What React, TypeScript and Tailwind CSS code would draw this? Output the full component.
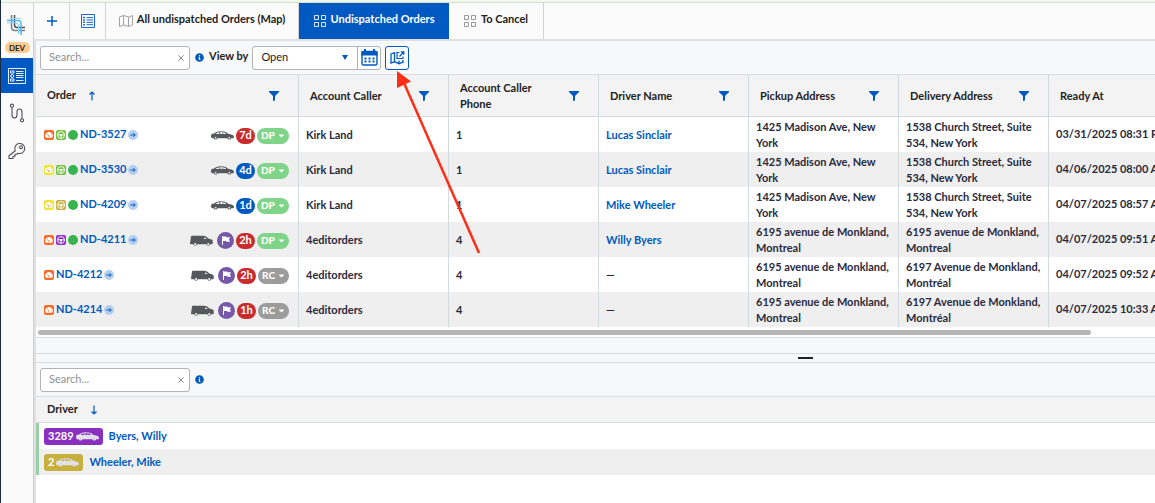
import type { ReactNode } from 'react'
import { FaCaretDown, FaInfoCircle } from 'react-icons/fa'

type Vehicle = 'car' | 'van'

const orders = [
  { id: 'ND-3527', gauge: 'bg-[#f96a26]', wheel: 'bg-[#78c043]', online: true, vehicle: 'car', flag: false, age: '7d', ageColor: 'bg-[#c92c2c]', status: 'DP', caller: 'Kirk Land', phone: '1', driver: 'Lucas Sinclair', pickup: '1425 Madison Ave, New York', delivery: '1538 Church Street, Suite 534, New York', ready: '03/31/2025 08:31 PM' },
  { id: 'ND-3530', gauge: 'bg-[#f0e632]', wheel: 'bg-[#78c043]', online: true, vehicle: 'car', flag: false, age: '4d', ageColor: 'bg-[#0059c1]', status: 'DP', caller: 'Kirk Land', phone: '1', driver: 'Lucas Sinclair', pickup: '1425 Madison Ave, New York', delivery: '1538 Church Street, Suite 534, New York', ready: '04/06/2025 08:00 AM' },
  { id: 'ND-4209', gauge: 'bg-[#f0e632]', wheel: 'bg-[#c8af3e]', online: true, vehicle: 'car', flag: false, age: '1d', ageColor: 'bg-[#0059c1]', status: 'DP', caller: 'Kirk Land', phone: '1', driver: 'Mike Wheeler', pickup: '1425 Madison Ave, New York', delivery: '1538 Church Street, Suite 534, New York', ready: '04/07/2025 08:57 AM' },
  { id: 'ND-4211', gauge: 'bg-[#f96a26]', wheel: 'bg-[#8a30c0]', online: true, vehicle: 'van', flag: true, age: '2h', ageColor: 'bg-[#c92c2c]', status: 'DP', caller: '4editorders', phone: '4', driver: 'Willy Byers', pickup: '6195 avenue de Monkland, Montreal', delivery: '6195 avenue de Monkland, Montreal', ready: '04/07/2025 09:51 AM' },
  { id: 'ND-4212', gauge: 'bg-[#f96a26]', wheel: '', online: false, vehicle: 'van', flag: true, age: '2h', ageColor: 'bg-[#c92c2c]', status: 'RC', caller: '4editorders', phone: '4', driver: '', pickup: '6195 avenue de Monkland, Montreal', delivery: '6197 Avenue de Monkland, Montréal', ready: '04/07/2025 09:52 AM' },
  { id: 'ND-4214', gauge: 'bg-[#f96a26]', wheel: '', online: false, vehicle: 'van', flag: true, age: '1h', ageColor: 'bg-[#c92c2c]', status: 'RC', caller: '4editorders', phone: '4', driver: '', pickup: '6195 avenue de Monkland, Montreal', delivery: '6197 Avenue de Monkland, Montréal', ready: '04/07/2025 10:33 AM' }
]

const drivers = [
  { code: '3289', name: 'Byers, Willy', color: 'bg-[#8a30c0]' },
  { code: '2', name: 'Wheeler, Mike', color: 'bg-[#c8b03f]' }
]

const columns = ['Account Caller', 'Account Caller Phone', 'Driver Name', 'Pickup Address', 'Delivery Address', 'Ready At']

function VehicleIcon({ type, className }: { type: Vehicle; className: string }) {
  if (type === 'van') {
    return (
      <svg viewBox="0 0 23 11" className={className} fill="currentColor">
        <path d="M1 1.500Q1 .7 1.800.7H13q1.700 0 3 .8l3 2.200 2.600.8q1.100.4 1.100 1.500v2.300q0 .9-.8.9H.700Q0 9.200 0 8.500z" />
        <path d="M14 2.500v1.600h3l-1.700-1.200z" fill="#f0f0f0" />
        <circle cx="5.200" cy="9" r="1.800" />
        <circle cx="18.300" cy="9" r="1.800" />
        <circle cx="5.200" cy="9.100" r="1.100" fill="#f4f4f4" />
        <circle cx="18.300" cy="9.100" r="1.100" fill="#f4f4f4" />
      </svg>
    )
  }
  return (
    <svg viewBox="0 0 23 9" className={className} fill="currentColor">
      <path
        fillRule="evenodd"
        d="M.5 3.100 3.200 2.400Q5 .6 7.500.4q4-.4 6.500.3 1.500.6 3.200 2.100 3.400.5 5 1.500.8.800.8 2.200l-.7.700H1Q0 6.600 0 5.300zM4.600 2.900h3.600l.3-1.700Q6 1.200 4.600 2.900zm4.600 0h2.300V1.100H9.500zm3 0h3.100Q14 1.500 12.200 1.200z"
      />
      <circle cx="4.600" cy="6.700" r="1.900" />
      <circle cx="18.300" cy="6.700" r="1.900" />
      <circle cx="4.600" cy="6.700" r="1" fill="#d4d6d8" />
      <circle cx="18.300" cy="6.700" r="1" fill="#d4d6d8" />
    </svg>
  )
}

function FilterIcon() {
  return (
    <svg viewBox="0 0 10 10" className="size-[10px]" fill="#0059c1">
      <path d="M0 0h10v1L6 5v4.500L4 10V5L0 1z" />
    </svg>
  )
}

function SortArrow({ down }: { down?: boolean }) {
  return (
    <svg viewBox="0 0 8 10" className="h-[10px] w-2" fill="none" stroke="#0059c1" strokeWidth="1.2">
      {down ? <path d="M4 .5v8.500M1.500 6.500 4 9l2.500-2.500" /> : <path d="M4 9.500V1M1.500 3.500 4 1l2.500 2.500" />}
    </svg>
  )
}

function GridIcon({ className }: { className: string }) {
  return (
    <svg viewBox="0 0 12 12" className={className} fill="none" stroke="currentColor">
      <path d="M.5.5h4v4h-4zM7.500.5h4v4h-4zM.5 7.500h4v4h-4zM7.500 7.500h4v4h-4z" />
    </svg>
  )
}

function GaugeIcon({ color }: { color: string }) {
  return (
    <span className={`flex size-[10px] items-center justify-center rounded-[2px] ${color}`}>
      <svg viewBox="0 0 10 10" className="size-[10px]" fill="none">
        <path d="M1.800 7.800A3.700 3.700 0 1 1 8.200 7.800z" fill="#fff" />
        <path d="M5.400 7 3.400 4.300M6.300 4.200l.5-.5M7 6h.600" stroke="#f0803c" strokeWidth="1" />
      </svg>
    </span>
  )
}

function WheelIcon({ color }: { color: string }) {
  return (
    <span className={`flex size-[10px] items-center justify-center rounded-[2px] ${color}`}>
      <svg viewBox="0 0 10 10" className="size-[10px]" fill="none" stroke="#fff" strokeWidth="0.900">
        <circle cx="5" cy="5" r="3.500" />
        <path d="M1.600 4.800h6.800M5 5v3.200" />
        <circle cx="5" cy="5.300" r="0.700" fill="#fff" />
      </svg>
    </span>
  )
}

function SearchBox({ label }: { label: string }) {
  return (
    <div className="flex h-6 w-[150px] items-center rounded-[3px] border border-[#b3b3b3] bg-white pr-1">
      <input aria-label={label} placeholder="Search..." className="min-w-0 flex-1 bg-transparent px-2 text-[11px] font-normal outline-none placeholder:text-[#8f8f8f]" />
      <button aria-label="Clear search" className="flex size-2 items-center justify-center">
        <svg viewBox="0 0 6 6" className="size-[6px]" stroke="#8a8a8a">
          <path d="M.3.3l5.400 5.400M5.700.3.300 5.700" />
        </svg>
      </button>
    </div>
  )
}

function OrderCell({ order }: { order: (typeof orders)[number] }) {
  return (
    <div className="flex items-center justify-between pr-[9px]">
      <div className="flex items-center gap-[2px]">
        <GaugeIcon color={order.gauge} />
        {order.wheel && <WheelIcon color={order.wheel} />}
        {order.online && <span className="size-[10px] rounded-full bg-[#36b44e]" />}
        <a href="#" className="text-[#0059c1]">{order.id}</a>
        <button aria-label={`Open ${order.id}`} className="flex size-[10px] items-center justify-center rounded-full bg-[#b5cff0]">
          <svg viewBox="0 0 6 6" className="size-[6px]" fill="none" stroke="#0059c1" strokeWidth="1">
            <path d="M.4 3h4.800M3.400 1.200 5.200 3 3.400 4.800" />
          </svg>
        </button>
      </div>
      <div className="flex items-center gap-[2px] pt-[2px] text-white">
        <VehicleIcon type={order.vehicle as Vehicle} className="w-[23px] text-[#55595e]" />
        {order.flag && (
          <span className="ml-[2px] flex size-[17px] items-center justify-center rounded-full bg-[#7559a8]">
            <svg viewBox="0 0 8 9" className="h-[9px] w-2" fill="#fff">
              <path d="M0 0h1v9H0zM1 .5h3l.5.8H8L7 3.500l1 2.200H4.500L4 5H1z" />
            </svg>
          </span>
        )}
        <span className={`flex h-4 w-[19px] items-center justify-center rounded-full ${order.ageColor}`}>{order.age}</span>
        <button className={`flex h-4 items-center gap-[2px] rounded-full px-1 text-[10px] font-black ${order.status === 'DP' ? 'w-8 bg-[#7fd489]' : 'w-[31px] bg-[#9c9c9c]'}`}>
          {order.status}
          <FaCaretDown size={9} className="shrink-0" />
        </button>
      </div>
    </div>
  )
}

function Td({ children }: { children: ReactNode }) {
  return <td className="h-[35px] border-r border-[#d3dade] px-[7px] leading-4">{children}</td>
}

function Sidebar() {
  return (
    <aside className="flex w-[33px] shrink-0 flex-col items-center border-r border-[#cfcfcf] bg-[#fafafa]">
      <a href="#" aria-label="Home" className="mt-3">
        <svg viewBox="0 0 20 20" className="size-5" fill="none">
          <path d="M4.500 0v12q0 3.500 3.500 3.500h10" stroke="#7d8087" strokeWidth="1.500" />
          <path d="M7.500 0v10q0 2.500 2.500 2.500h8" stroke="#4b4e55" strokeWidth="1.500" />
          <path d="M0 5.500h11q3 0 3 3V20" stroke="#52b8e8" strokeWidth="1.500" />
          <path d="M0 8h8q3.500 0 3.500 3v8M3 3.500h11" stroke="#8fd2f2" strokeWidth="1.200" />
        </svg>
      </a>
      <span className="mt-[7px] flex h-[11px] w-[25px] items-center justify-center rounded-full bg-[#fdcb8c] text-[8px]">DEV</span>
      <button aria-label="Orders" className="mt-[5px] flex h-[35px] w-full items-center justify-center bg-[#0059c1]">
        <svg viewBox="0 0 18 16" className="h-4 w-[18px]" fill="none" stroke="#fff">
          <path d="M.5.5h17v15H.500zM8 3.500h7.500M8 5.500h7.500M8 7.500h7.500M8 9.500h7.500M8 12.500h7.500" strokeWidth="0.900" />
          <path d="M2.500 3h3.500v2H2.500zM2.500 11h3.500v2H2.500z" strokeWidth="0.900" />
          <circle cx="4.200" cy="8" r="1.500" />
        </svg>
      </button>
      <button aria-label="Routes" className="mt-[10px]">
        <svg viewBox="0 0 16 20" className="h-5 w-4" fill="none" stroke="#4d4d55" strokeWidth="1.100">
          <circle cx="3" cy="2.700" r="1.600" />
          <circle cx="13" cy="17.300" r="1.600" />
          <path d="M3 4.300V12q0 3 2.500 3T8 12V9q0-3 2.500-3T13 9v6.700" />
        </svg>
      </button>
      <button aria-label="Keys" className="mt-[19px]">
        <svg viewBox="0 0 18 18" className="size-[18px]" fill="none" stroke="#4d4d55" strokeWidth="1.100" strokeLinejoin="round">
          <path d="M7.300 8.700A5 5 0 1 1 10.200 11.200L8.800 12.300H7v2H5V16.500H1v-2.800z" />
          <circle cx="13" cy="5.200" r="1.400" />
        </svg>
      </button>
    </aside>
  )
}

function TabBar() {
  return (
    <nav className="flex h-[38px] border-b-2 border-[#e0e0e0] bg-[#fbfbfb]">
      <button aria-label="Add" className="flex w-9 items-center justify-center border-r border-[#d3d3d3]">
        <svg viewBox="0 0 10 10" className="size-[10px]" stroke="#0059c1" strokeWidth="1.500">
          <path d="M5 0v10M0 5h10" />
        </svg>
      </button>
      <button aria-label="Views" className="flex w-9 items-center justify-center border-r border-[#d3d3d3]">
        <svg viewBox="0 0 14 14" className="size-[14px]" fill="none" stroke="#0059c1">
          <path d="M.5.5h13v13H.500z" strokeWidth="0.900" />
          <path d="M5.500 3.500H12M5.500 5.900H12M5.500 8.300H12M5.500 10.700H12" strokeWidth="0.900" />
          <path d="M2.200 3.500h1.600M2.200 5.900h1.600M2.200 8.300h1.600M2.200 10.700h1.600" strokeWidth="1.500" />
        </svg>
      </button>
      <button className="flex w-[193px] items-center justify-center gap-1 border-r border-[#d3d3d3] pb-1">
        <svg viewBox="0 0 14 12" className="mt-[3px] h-3 w-[14px]" fill="none" stroke="#999" strokeWidth="0.900">
          <path d="M.5 2 4.500.5l5 1.500 4-1.500V10l-4 1.500-5-1.500-4 1.500zM4.500.5V10M9.500 2v9.500" />
        </svg>
        All undispatched Orders (Map)
      </button>
      <button className="flex w-[150px] items-center justify-center gap-[5px] bg-[#0059c1] pb-1 text-white">
        <GridIcon className="mt-[3px] size-3 text-[#dbe8f8]" />
        Undispatched Orders
      </button>
      <button className="flex w-[95px] items-center justify-center gap-[5px] border-r border-[#d3d3d3] pb-1">
        <GridIcon className="mt-[3px] size-3 text-[#999]" />
        To Cancel
      </button>
    </nav>
  )
}

function Toolbar() {
  return (
    <div className="flex h-[34px] items-center border-b border-[#d8dde1] pl-1">
      <SearchBox label="Search orders" />
      <FaInfoCircle size={9} className="ml-[5px] text-[#0059c1]" />
      <label htmlFor="view-by" className="ml-[5px] pb-[2px]">View by</label>
      <div className="ml-1 flex h-6 items-center rounded-[3px] border border-[#b3b3b3] bg-white">
        <select id="view-by" className="h-full w-20 appearance-none pl-2 text-[11px] font-normal outline-none">
          <option>Open</option>
        </select>
        <span className="flex w-6 justify-center">
          <svg viewBox="0 0 6 5" className="h-[5px] w-[6px]" fill="#0059c1"><path d="M0 0h6L3 5z" /></svg>
        </span>
        <button aria-label="Pick dates" className="flex h-full w-[23px] items-center justify-center border-l border-[#b3b3b3]">
          <svg viewBox="0 0 17 17" className="size-[17px]">
            <path d="M4 0v3M13 0v3" stroke="#0059c1" strokeWidth="2" />
            <rect x="1" y="2.500" width="15" height="13.500" rx="1.500" fill="#fff" stroke="#0059c1" strokeWidth="1.400" />
            <path d="M.5 2h16v4.500H.500z" fill="#0059c1" />
            <path d="M3.500 9.500h10M3.500 12.500h10" stroke="#0059c1" strokeWidth="2" strokeDasharray="2 2" />
          </svg>
        </button>
      </div>
      <button aria-label="Open map" className="ml-1 flex size-6 items-center justify-center rounded-[3px] border border-[#0059c1] bg-white">
        <svg viewBox="0 0 15 14" className="h-[14px] w-[15px]" fill="none" stroke="#0059c1" strokeWidth="1.300">
          <path d="M1 3 4.500 1.700v9L1 12zM4.500 10.700l4.500 2V9.500M9 12.700l4-1.500V9" />
          <path d="M9.500 1.500H7v6h6V5.500M9.500 5.500 13.500 1M10.700.8h3.100v3" strokeWidth="1.200" />
        </svg>
      </button>
    </div>
  )
}

function OrdersTable() {
  return (
    <div className="overflow-hidden bg-white">
      <table className="w-[1163px] table-fixed border-separate border-spacing-0 text-left text-[#2a2a3c]">
        <thead className="bg-[#f3f3f3] text-[#222]">
          <tr>
            <th className="h-[42px] w-[263px] border-r border-b border-[#d3dade] pr-[19px] pl-[11px]">
              <div className="flex items-center">
                <span className="mr-3">Order</span>
                <SortArrow />
                <button aria-label="Filter Order" className="ml-auto"><FilterIcon /></button>
              </div>
            </th>
            {columns.map((name) => (
              <th key={name} className="w-[150px] border-r border-b border-[#d3dade] pr-[19px] pl-[11px] leading-4">
                <div className="flex items-center justify-between">
                  <span className="max-w-[90px]">{name}</span>
                  <button aria-label={`Filter ${name}`}><FilterIcon /></button>
                </div>
              </th>
            ))}
          </tr>
        </thead>
        <tbody>
          {orders.map((order) => (
            <tr key={order.id} className="even:bg-[#efefef]">
              <td className="border-r border-[#d3dade] pl-2"><OrderCell order={order} /></td>
              <Td>{order.caller}</Td>
              <Td>{order.phone}</Td>
              <Td>{order.driver ? <a href="#" className="text-[#0059c1]">{order.driver}</a> : '—'}</Td>
              <Td>{order.pickup}</Td>
              <Td>{order.delivery}</Td>
              <td className="whitespace-nowrap pl-[7px]">{order.ready}</td>
            </tr>
          ))}
        </tbody>
      </table>
      <div className="flex h-[11px] items-center border-b border-[#d8dde1] px-[2px]">
        <div className="h-[5px] w-[94.4%] rounded-full bg-[#b5b5b5]" />
      </div>
    </div>
  )
}

function DriversPanel() {
  return (
    <section className="flex flex-1 flex-col">
      <div className="flex h-[34px] items-center border-b border-[#d8dde1] pl-1">
        <SearchBox label="Search drivers" />
        <FaInfoCircle size={9} className="ml-[5px] text-[#0059c1]" />
      </div>
      <table className="w-full border-separate border-spacing-0 text-left">
        <thead className="bg-[#f3f3f3] text-[#222]">
          <tr>
            <th className="h-[26px] border-b border-[#d8dde1] pl-[11px]">
              <div className="flex items-center gap-3">Driver <SortArrow down /></div>
            </th>
          </tr>
        </thead>
        <tbody>
          {drivers.map((driver) => (
            <tr key={driver.code} className="bg-white even:bg-[#efefef]">
              <td className="h-[26px] border-l-3 border-[#97cfa6] pl-[5px]">
                <div className="flex items-center gap-[6px]">
                  <span className={`flex h-[17px] items-center gap-[2px] rounded-[3px] px-1 text-white ${driver.color}`}>
                    {driver.code}
                    <VehicleIcon type="car" className="w-[23px] text-[#e2e0e8]" />
                  </span>
                  <a href="#" className="text-[#0059c1]">{driver.name}</a>
                </div>
              </td>
            </tr>
          ))}
        </tbody>
      </table>
      <div className="flex-1 bg-white" />
    </section>
  )
}

export default function App() {
  return (
    <div className="relative flex min-h-screen flex-col overflow-hidden border-l border-[#1b2a41] bg-white font-['Lato',sans-serif] text-[11px] font-bold text-[#222]">
      <div className="h-[3px] border-b border-[#d5dfcb] bg-[#f3f8ee]" />
      <div className="flex flex-1">
        <Sidebar />
        <div className="flex min-w-0 flex-1 flex-col">
          <TabBar />
          <main className="flex flex-1 flex-col border-l-2 border-[#e0e0e0] bg-[#f7f8fa]">
            <Toolbar />
            <OrdersTable />
            <div className="h-4 border-b border-[#d8dde1]" />
            <div className="flex h-[9px] items-center justify-center border-b border-[#d8dde1] pl-[420px]">
              <span className="h-[2px] w-[15px] bg-[#222]" />
            </div>
            <DriversPanel />
          </main>
        </div>
      </div>
      {/* pointer to the map button */}
      <svg viewBox="0 0 86 184" className="pointer-events-none absolute top-[71px] left-[395px] h-[184px] w-[86px]" fill="#ff2d16">
        <path d="M8 12 83 182" stroke="#ff2d16" strokeWidth="2.500" />
        <path d="M1 0 15 10.500 1 17z" />
      </svg>
    </div>
  )
}
